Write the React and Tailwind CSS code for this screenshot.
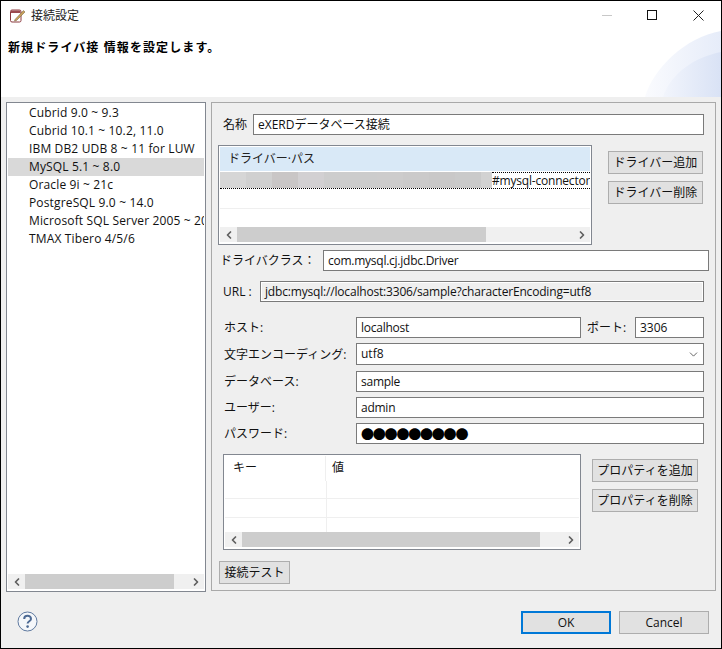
import React from 'react';
import { ChevronDown, ChevronLeft, ChevronRight } from 'lucide-react';

const font = "font-['Open_Sans','Noto_Sans_CJK_JP',sans-serif]";

const drivers = [
  'Cubrid 9.0 ~ 9.3',
  'Cubrid 10.1 ~ 10.2, 11.0',
  'IBM DB2 UDB 8 ~ 11 for LUW',
  'MySQL 5.1 ~ 8.0',
  'Oracle 9i ~ 21c',
  'PostgreSQL 9.0 ~ 14.0',
  'Microsoft SQL Server 2005 ~ 2019',
  'TMAX Tibero 4/5/6',
];

const mosaic = ['#d6d6d6', '#d0d0d0', '#c9c6c6', '#d2d0d2', '#cdcdcd', '#cccccc', '#cdcccc', '#cbcaca', '#c9c8c8', '#cacaca'];

function Field({ className = 'bg-white', children }) {
  return (
    <div className={`h-[21px] shrink-0 border border-[#7a7a7a] pl-1 leading-[20px] text-[12px] text-[#111] whitespace-nowrap overflow-hidden ${className}`}>
      {children}
    </div>
  );
}

function Btn({ className = 'border border-[#adadad]', children }) {
  return (
    <div className={`h-[23px] bg-[#e1e1e1] flex items-center justify-center text-[12px] text-[#111] whitespace-nowrap ${className}`}>
      {children}
    </div>
  );
}

function HScroll({ thumb }) {
  return (
    <div className="h-[15px] bg-[#f0f0f0] flex shrink-0">
      <div className="w-[17px] flex items-center justify-center text-[#606060]">
        <ChevronLeft size={12} strokeWidth={3.5} />
      </div>
      <div className="flex-1">
        <div className="h-full bg-[#cdcdcd]" style={{ width: thumb }} />
      </div>
      <div className="w-[17px] flex items-center justify-center text-[#606060]">
        <ChevronRight size={12} strokeWidth={3.5} />
      </div>
    </div>
  );
}

function FormRow({ label, className = '', children }) {
  return (
    <div className={`flex items-center ${className}`}>
      <div className="w-[144px] shrink-0 pl-[12px] pt-px text-[12px] text-[#111] whitespace-nowrap">{label}</div>
      {children}
    </div>
  );
}

export default function App() {
  return (
    <div className={`w-[722px] h-[649px] overflow-hidden border border-black bg-[#efefef] flex flex-col ${font}`}>
      {/* title + banner */}
      <div className="relative h-[96px] shrink-0 bg-white overflow-hidden">
        <div className="h-[30px] flex items-center pl-[9px]">
          <svg width="16" height="14" viewBox="0 0 16 14">
            <rect x="0.5" y="1" width="10.5" height="12" rx="1.5" fill="#fff" stroke="#8c3a3f" />
            <rect x="1" y="1.5" width="9.5" height="2.5" fill="#9c4a4f" />
            <path d="M5 10.5 L13.5 1.5 L15 3 L6.5 11.5 L4.5 12Z" fill="#c9a25a" stroke="#6b5a3a" strokeWidth="0.5" />
          </svg>
          <span className="ml-[5px] text-[12px] text-[#222]">接続設定</span>
        </div>
        {/* window controls */}
        <svg className="absolute right-[17px] top-[8px]" width="102" height="12" viewBox="0 0 102 12">
          <path d="M0 6.5 H10" stroke="#c8c8c8" fill="none" />
          <rect x="45.5" y="1.5" width="9" height="9" stroke="#111" fill="none" />
          <path d="M91.5 1.5 L101.5 11.5 M101.5 1.5 L91.5 11.5" stroke="#222" fill="none" />
        </svg>
        <div className="pl-[7px] pt-[8px] text-[12px] font-bold text-black tracking-[1.1px]">新規ドライバ接 情報を設定します。</div>
        <svg className="absolute right-0 top-[30px]" width="76" height="66" viewBox="0 0 76 66">
          <defs>
            <linearGradient id="outer" x1="0" x2="1" y1="0" y2="0">
              <stop offset="0" stopColor="#fafbfe" />
              <stop offset="1" stopColor="#e6ecf9" />
            </linearGradient>
            <linearGradient id="inner" x1="0" x2="1" y1="0" y2="0">
              <stop offset="0" stopColor="#f2f5fc" />
              <stop offset="1" stopColor="#d9e2f5" />
            </linearGradient>
          </defs>
          <path d="M0 66 C8 38 40 6 76 0 L76 66Z" fill="url(#outer)" />
          <path d="M18 66 C26 42 50 26 76 21 L76 66Z" fill="url(#inner)" />
        </svg>
      </div>

      {/* body */}
      <div className="flex pl-[5px] pt-[5px]">
        <div className="w-[200px] h-[490px] border border-[#828790] bg-white p-px pb-[2px] flex flex-col">
          <div className="flex-1 overflow-hidden text-[12px] text-[#111] tracking-[0.15px]">
            {drivers.map((d) => (
              <div key={d} className={`h-[18px] pl-[21px] leading-[18px] whitespace-nowrap overflow-hidden ${d.startsWith('MySQL') ? 'bg-[#d9d9d9]' : ''}`}>{d}</div>
            ))}
          </div>
          <HScroll thumb={149} />
        </div>

        <div className="ml-[5px] w-[505px] h-[489px] border border-[#a9a9a9] text-[12px]">
          {/* name */}
          <div className="mt-[11px] flex items-center pl-[11px]">
            <span className="w-[30px] text-[12px] text-[#111]">名称</span>
            <Field className="w-[451px] bg-white">eXERDデータベース接続</Field>
          </div>

          {/* driver path */}
          <div className="mt-[10px] ml-[6px] flex">
            <div className="w-[374px] h-[100px] border border-[#828790] bg-white p-px pb-[2px] flex flex-col">
              <div className="h-[25px] shrink-0 bg-[#d9e9f7] pl-[8px] leading-[24px] border-b border-white text-[#222]">ドライバー·パス</div>
              <div className="h-[17px] shrink-0 flex overflow-hidden">
                <div className="flex w-[261px] h-[16px]">
                  {mosaic.map((c, i) => (
                    <div key={i} className="flex-1" style={{ background: c }} />
                  ))}
                </div>
                <div className="w-[11px] h-[16px] bg-[#d2d2d2]" />
                <div className="flex-1 border-t border-dotted border-black leading-[15px] whitespace-nowrap text-[#111] tracking-[-0.2px] overflow-hidden">#mysql-connector</div>
              </div>
              <div className="h-[20px] shrink-0 border-t border-dotted border-black relative -mt-px">
                <div className="absolute left-0 right-0 top-[19px] border-t border-[#efefef]" />
              </div>
              <div className="flex-1" />
              <HScroll thumb={249} />
            </div>
            <div className="ml-[16px] mt-[6px] flex flex-col gap-[7px]">
              <Btn className="w-[95px] border border-[#adadad]">ドライバー追加</Btn>
              <Btn className="w-[95px] border border-[#adadad]">ドライバー削除</Btn>
            </div>
          </div>

          {/* driver class */}
          <div className="mt-[5px] flex items-center pl-[8px]">
            <span className="w-[103px] whitespace-nowrap text-[#111]">ドライバクラス：</span>
            <Field className="w-[386px] bg-white tracking-[-0.25px]">com.mysql.cj.jdbc.Driver</Field>
          </div>

          {/* url */}
          <div className="mt-[10px] flex items-center pl-[11px]">
            <span className="w-[37px] text-[#111]">URL :</span>
            <Field className="w-[444px] bg-[#efefef] shadow-[inset_0_0_0_1px_#fff] tracking-[-0.18px]">jdbc:mysql://localhost:3306/sample?characterEncoding=utf8</Field>
          </div>

          {/* connection */}
          <FormRow label="ホスト:" className="mt-[15px]">
            <Field className="w-[225px] bg-white tracking-[-0.25px]">localhost</Field>
            <span className="ml-[6px] w-[48px] text-[#111]">ポート:</span>
            <Field className="w-[69px] bg-white">3306</Field>
          </FormRow>
          <FormRow label="文字エンコーディング:" className="mt-[5px]">
            <Field className="w-[348px] !h-[22px] bg-white relative">
              utf8
              <ChevronDown size={13} strokeWidth={1.5} className="absolute right-[3px] top-[4px] text-[#444]" />
            </Field>
          </FormRow>
          <FormRow label="データベース:" className="mt-[6px]">
            <Field className="w-[348px] bg-white tracking-[-0.25px]">sample</Field>
          </FormRow>
          <FormRow label="ユーザー:" className="mt-[5px]">
            <Field className="w-[348px] bg-white tracking-[-0.25px]">admin</Field>
          </FormRow>
          <FormRow label="パスワード:" className="mt-[5px]">
            <Field className="w-[348px] bg-white !text-[13px] tracking-[-1.2px] text-black">●●●●●●●●●</Field>
          </FormRow>

          {/* properties */}
          <div className="mt-[10px] ml-[11px] flex">
            <div className="w-[358px] h-[96px] border border-[#828790] bg-white p-px pb-[2px] flex flex-col">
              <div className="flex h-[25px] shrink-0 text-[#111]">
                <div className="w-[101px] pl-[8px] leading-[23px] border-r border-[#efefef]">キー</div>
                <div className="pl-[6px] leading-[23px]">値</div>
              </div>
              <div className="flex-1 flex flex-col">
                <div className="h-[18px] border-b border-[#efefef]"><div className="w-[102px] h-full border-r border-[#efefef]" /></div>
                <div className="h-[19px] border-b border-[#efefef]"><div className="w-[102px] h-full border-r border-[#efefef]" /></div>
                <div className="flex-1"><div className="w-[102px] h-full border-r border-[#efefef]" /></div>
              </div>
              <HScroll thumb={298} />
            </div>
            <div className="ml-[11px] mt-[5px] flex flex-col gap-[7px]">
              <Btn className="w-[106px] border border-[#adadad]">プロパティを追加</Btn>
              <Btn className="w-[106px] border border-[#adadad]">プロパティを削除</Btn>
            </div>
          </div>

          <Btn className="mt-[11px] ml-[7px] w-[71px] border border-[#adadad]">接続テスト</Btn>
        </div>
      </div>

      {/* footer */}
      <div className="flex items-start pl-[16px] pt-[19px]">
        <svg width="21" height="21" viewBox="0 0 21 21">
          <circle cx="10.5" cy="10.5" r="9.5" fill="#f5f7fa" stroke="#5f7aa0" strokeWidth="1" />
          <path d="M7.2 8 C7.2 3.8 14 3.8 14 8 C14 10.2 10.6 10.4 10.6 12.6" fill="none" stroke="#4d6a94" strokeWidth="2" />
          <circle cx="10.6" cy="15.6" r="1.3" fill="#4d6a94" />
        </svg>
        <div className="ml-auto flex gap-[8px] pr-[12px]">
          <Btn className="w-[90px] border-2 border-[#0078d7]">OK</Btn>
          <Btn className="w-[90px] border border-[#adadad]">Cancel</Btn>
        </div>
      </div>
    </div>
  );
}
